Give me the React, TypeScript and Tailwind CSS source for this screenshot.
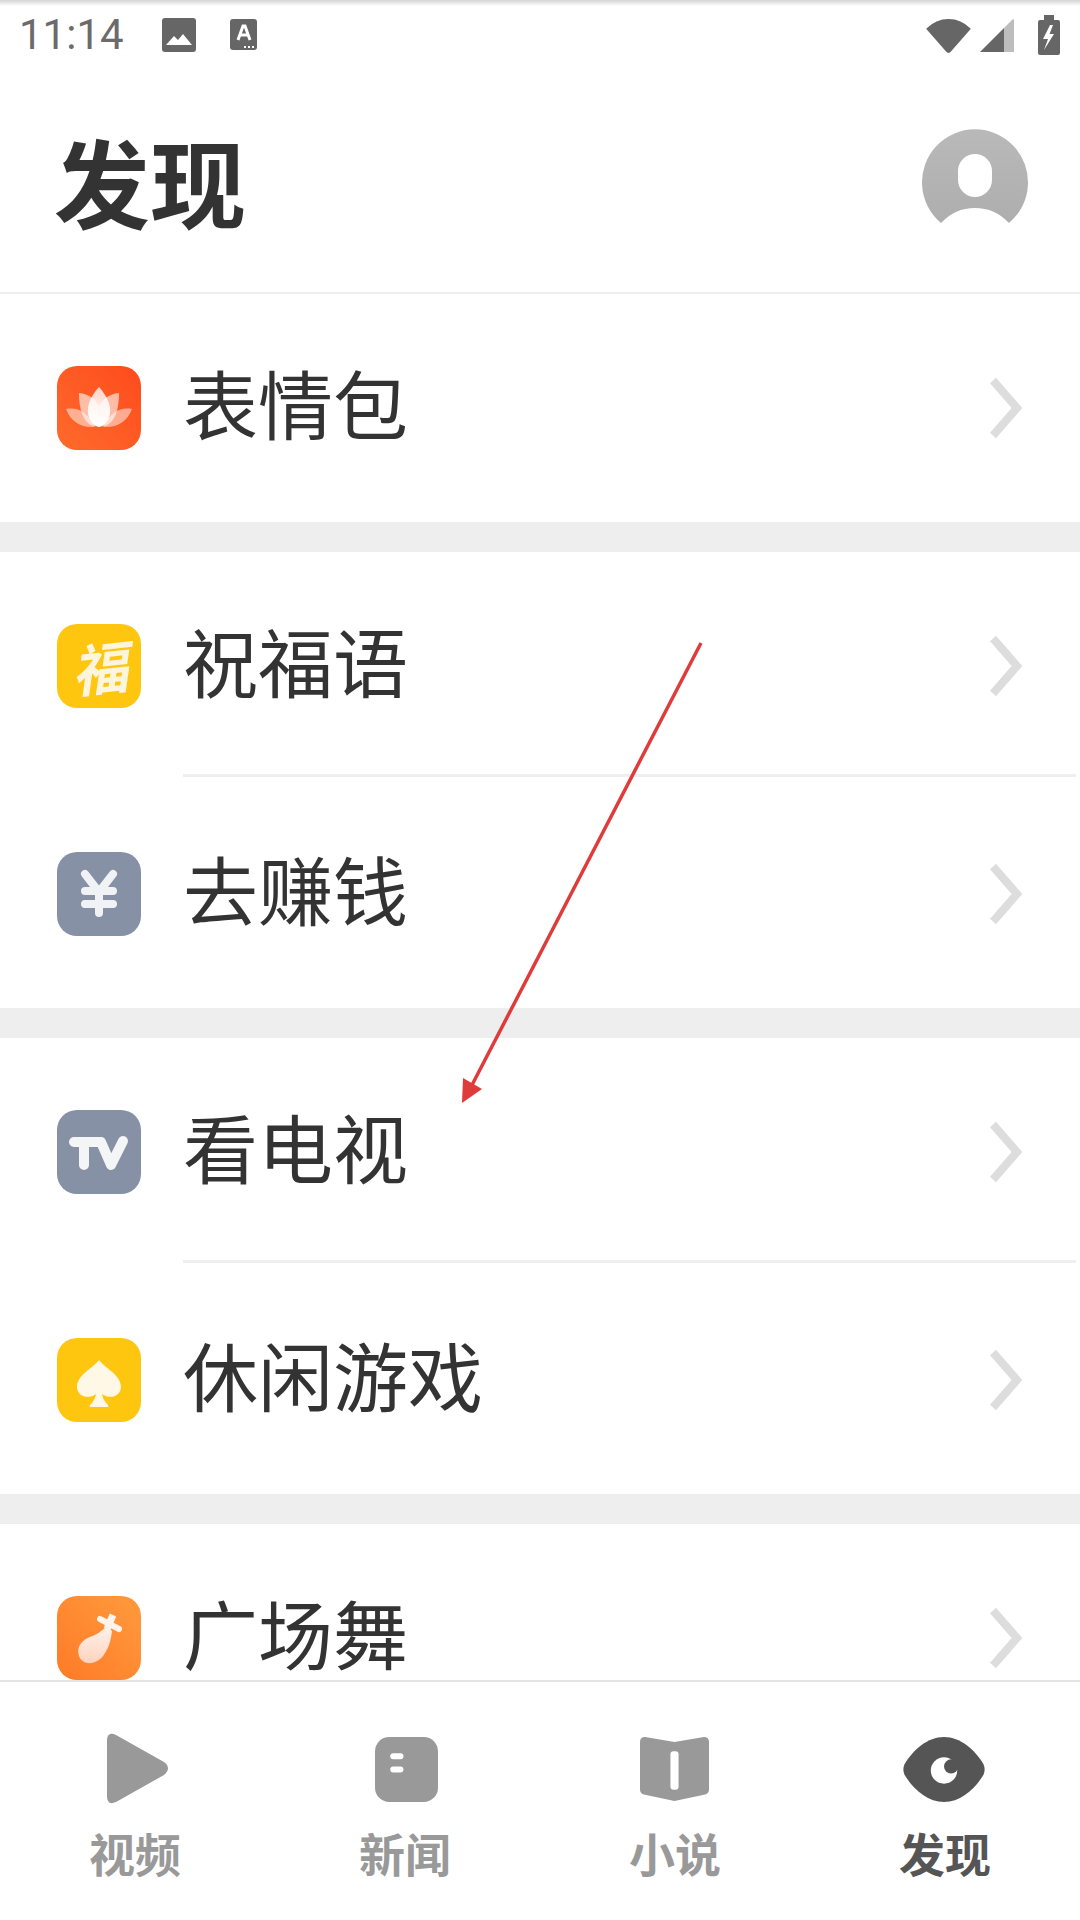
import type { ReactNode } from "react";

const cjk = "font-['Noto_Sans_CJK_SC','Noto_Sans',sans-serif]";

function Chevron() {
  return (
    <svg width="36" height="64" viewBox="0 0 36 64" className="shrink-0">
      <path d="M5 4.5 L29 32 L5 59.5" fill="none" stroke="#dddddd" strokeWidth="8" />
    </svg>
  );
}

function Lotus() {
  return (
    <svg width="84" height="84" viewBox="0 0 84 84">
      <defs>
        <linearGradient id="lotusIn" x1="0" y1="0" x2="0" y2="1">
          <stop offset="0" stopColor="#fff" stopOpacity="0.75" />
          <stop offset="1" stopColor="#fff" stopOpacity="1" />
        </linearGradient>
      </defs>
      <path d="M9 43 C20 41 30 45 38 61 C24 62 14 56 9 43 Z" fill="#fff" fillOpacity="0.5" />
      <path d="M75 43 C64 41 54 45 46 61 C60 62 70 56 75 43 Z" fill="#fff" fillOpacity="0.5" />
      <path d="M22 27 C32 28 38 33 42 40 L42 60 C30 62 22 50 22 27 Z" fill="#fff" fillOpacity="0.6" />
      <path d="M62 27 C52 28 46 33 42 40 L42 60 C54 62 62 50 62 27 Z" fill="#fff" fillOpacity="0.6" />
      <path d="M42 21 C50 30 54 39 53 47 C52 55 47 60 42 61 C37 60 32 55 31 47 C30 39 34 30 42 21 Z" fill="url(#lotusIn)" />
    </svg>
  );
}

function Fu() {
  return (
    <span className="font-['Noto_Sans_CJK_SC',sans-serif] text-[56px] leading-[62px] font-bold text-[#fff5dc] italic -rotate-6">
      福
    </span>
  );
}

function Yen() {
  return (
    <svg width="84" height="84" viewBox="0 0 84 84">
      <path
        d="M28 22 L42 40 L56 22 M42 40 V61 M28 39 H56 M28 52 H56"
        fill="none"
        stroke="#f1f2f5"
        strokeWidth="8"
        strokeLinecap="round"
        strokeLinejoin="round"
      />
    </svg>
  );
}

function Tv() {
  return (
    <svg width="84" height="84" viewBox="0 0 84 84">
      <path
        d="M17 32 H44 M27 32 V55 M44 32 L54 55 L66 31"
        fill="none"
        stroke="#f4f5f7"
        strokeWidth="10"
        strokeLinecap="round"
        strokeLinejoin="round"
      />
    </svg>
  );
}

function Spade() {
  return (
    <svg width="84" height="84" viewBox="0 0 84 84">
      <path
        d="M42 22 C48 30 64 37 64 49 C64 58 53 62 45 56 C46 61 48 64 51 67 Q52 69 50 69 H34 Q32 69 33 67 C36 64 38 61 39 56 C31 62 20 58 20 49 C20 37 36 30 42 22 Z"
        fill="#fff8e6"
      />
    </svg>
  );
}

function Pipa() {
  return (
    <svg width="84" height="84" viewBox="0 0 84 84">
      <defs>
        <linearGradient id="pipaFill" x1="0" y1="0" x2="0" y2="1">
          <stop offset="0" stopColor="#fff3ec" />
          <stop offset="1" stopColor="#ffd2bd" />
        </linearGradient>
      </defs>
      <path d="M43 23 L62 33" stroke="#fff3ec" strokeWidth="6" strokeLinecap="round" />
      <path d="M56 19 L50 33" stroke="#fff3ec" strokeWidth="7" />
      <path
        d="M50 30 L55 35 C54 44 52 52 46 60 C39 69 26 70 22 60 C19 51 25 44 33 41 C39 39 45 35 50 30 Z"
        fill="url(#pipaFill)"
      />
    </svg>
  );
}

type Item = { label: string; icon: ReactNode; bg: string; divider?: boolean };

function Row({ label, icon, bg, divider }: Item) {
  return (
    <div className="h-[228px] shrink-0 bg-white pt-[72px]">
      <div className="flex h-[84px] items-center pr-[56px] pl-[57px]">
        <div className={`flex h-[84px] w-[84px] shrink-0 items-center justify-center rounded-[20px] ${bg}`}>
          {icon}
        </div>
        <span className={`mb-[14px] ml-[42px] flex-1 text-[75px] leading-none text-[#333333] ${cjk}`}>{label}</span>
        <Chevron />
      </div>
      {divider && <div className="mt-[66px] mr-[4px] ml-[183px] h-[3px] bg-[#efefef]" />}
    </div>
  );
}

function Band() {
  return <div className="h-[30px] shrink-0 bg-[#eeeeee]" />;
}

function Tab({ label, active, icon }: { label: string; active?: boolean; icon: ReactNode }) {
  return (
    <div className="flex w-[270px] flex-col items-center">
      <div className="flex h-[72px] items-center justify-center">{icon}</div>
      <span className={`mt-[21px] text-[46px] leading-[52px] font-bold ${active ? "text-[#555555]" : "text-[#999999]"} ${cjk}`}>
        {label}
      </span>
    </div>
  );
}

export default function App() {
  return (
    <div className="relative flex h-[1920px] w-[1080px] flex-col overflow-hidden bg-white">
      {/* status bar */}
      <div className="h-[6px] shrink-0 bg-gradient-to-b from-[#d4d4d4] to-white" />
      <div className="flex h-[58px] shrink-0 items-center pr-[20px] pl-[19px]">
        <span className="font-['Roboto',sans-serif] text-[42px] leading-none text-[#6b6b6b]">11:14</span>
        <svg width="34" height="34" viewBox="0 0 34 34" className="ml-[38px]">
          <rect width="34" height="34" rx="3" fill="#666666" />
          <path d="M4 27 L12 18 L16 22 L21 16 L30 27 Z" fill="#ffffff" />
        </svg>
        <svg width="28" height="32" viewBox="0 0 28 32" className="ml-[34px]">
          <rect width="27" height="31" rx="3" fill="#666666" />
          <path d="M8 21 L13 7 H15 L20 21 M10 16 H18" fill="none" stroke="#ffffff" strokeWidth="3" />
          <path d="M14 28 H24" stroke="#ffffff" strokeWidth="2" strokeDasharray="2 2" />
        </svg>
        <div className="flex-1" />
        <svg width="45" height="36" viewBox="0 0 46 37">
          <path d="M23 37 Q21.5 37 20.5 35.5 L0 12 Q10 2 23 2 Q36 2 46 12 L25.5 35.5 Q24.5 37 23 37 Z" fill="#666666" />
        </svg>
        <svg width="34" height="34" viewBox="0 0 34 34" className="ml-[9px]">
          <path d="M0 34 L24 10 V34 Z" fill="#666666" />
          <path d="M24 10 L33 1 Q34 1 34 2 V34 H24 Z" fill="#bdbdbd" />
        </svg>
        <svg width="22" height="40" viewBox="0 0 22 40" className="ml-[24px]">
          <path d="M6 0 H16 V5 H20 Q22 5 22 7 V38 Q22 40 20 40 H2 Q0 40 0 38 V7 Q0 5 2 5 H6 Z" fill="#666666" />
          <path d="M12 10 L5 24 H10 L6 35 L16 19 H11.5 L15 10 Z" fill="#ffffff" />
        </svg>
      </div>

      {/* header */}
      <div className="flex h-[230px] shrink-0 items-start justify-between border-b-2 border-[#eeeeee] pr-[50px] pl-[54px]">
        <h1 className={`mt-[68px] text-[96px] leading-none font-semibold text-[#333333] ${cjk}`}>发现</h1>
        <svg width="108" height="100" viewBox="0 0 108 100" className="mt-[65px]">
          <defs>
            <linearGradient id="avatarFill" x1="0" y1="0" x2="0" y2="1">
              <stop offset="0" stopColor="#b9b9b9" />
              <stop offset="1" stopColor="#aeaeae" />
            </linearGradient>
          </defs>
          <path d="M19 94 A53 53 0 1 1 87 94 Q73 79 53 79 Q33 79 19 94 Z" fill="url(#avatarFill)" />
          <rect x="36" y="25" width="34" height="43" rx="17" fill="#ffffff" />
        </svg>
      </div>

      {/* list */}
      <div className="flex min-h-0 flex-1 flex-col overflow-hidden">
        <Row label="表情包" bg="bg-gradient-to-tr from-[#ff6a2c] to-[#ff4a1c]" icon={<Lotus />} />
        <Band />
        <Row label="祝福语" bg="bg-[#ffc60f]" icon={<Fu />} divider />
        <Row label="去赚钱" bg="bg-[#8791a6]" icon={<Yen />} />
        <Band />
        <Row label="看电视" bg="bg-[#8791a6]" icon={<Tv />} divider />
        <Row label="休闲游戏" bg="bg-[#ffc60f]" icon={<Spade />} />
        <Band />
        <Row label="广场舞" bg="bg-gradient-to-tr from-[#ff7a26] to-[#ff9a3c]" icon={<Pipa />} />
      </div>

      {/* tab bar */}
      <div className="flex h-[240px] shrink-0 border-t-2 border-[#e4e4e4] bg-white pt-[51px]">
        <Tab
          label="视频"
          icon={
            <svg width="66" height="72" viewBox="0 0 66 72" className="ml-[3px]">
              <path d="M3 8 Q3 -2 12 2 L60 29 Q68 35 60 42 L12 69 Q3 73 3 63 Z" fill="#999999" />
            </svg>
          }
        />
        <Tab
          label="新闻"
          icon={
            <svg width="63" height="65" viewBox="0 0 62 64" className="ml-[2px]">
              <rect width="62" height="64" rx="14" fill="#999999" />
              <rect x="15" y="16" width="13" height="6" rx="3" fill="#ffffff" />
              <rect x="15" y="29" width="13" height="6" rx="3" fill="#ffffff" />
            </svg>
          }
        />
        <Tab
          label="小说"
          icon={
            <svg width="69" height="65" viewBox="0 0 68 64" className="mr-[2px]">
              <path d="M5 0 L34 5 L63 0 Q68 0 68 5 V52 Q68 56 63 57 L34 63 L5 57 Q0 56 0 52 V5 Q0 0 5 0 Z" fill="#999999" />
              <rect x="30" y="14" width="8" height="38" rx="3" fill="#ffffff" />
            </svg>
          }
        />
        <Tab
          active
          label="发现"
          icon={
            <svg width="82" height="65" viewBox="0 0 80 64" className="mr-[2px]">
              <path d="M40 0 C56 0 70 12 79 27 Q81 32 79 37 C70 52 56 64 40 64 C24 64 10 52 1 37 Q-1 32 1 27 C10 12 24 0 40 0 Z" fill="#555555" />
              <circle cx="40" cy="33" r="13" fill="#ffffff" />
              <circle cx="47" cy="29" r="7" fill="#555555" />
            </svg>
          }
        />
      </div>

      {/* red annotation arrow drawn over the list */}
      <svg width="1080" height="1920" viewBox="0 0 1080 1920" className="pointer-events-none absolute top-0 left-0">
        <path d="M701 643 L472 1085" stroke="#e03b3b" strokeWidth="3.5" />
        <path d="M463 1078 L482 1089 L462 1103 Z" fill="#e03b3b" />
      </svg>
    </div>
  );
}
